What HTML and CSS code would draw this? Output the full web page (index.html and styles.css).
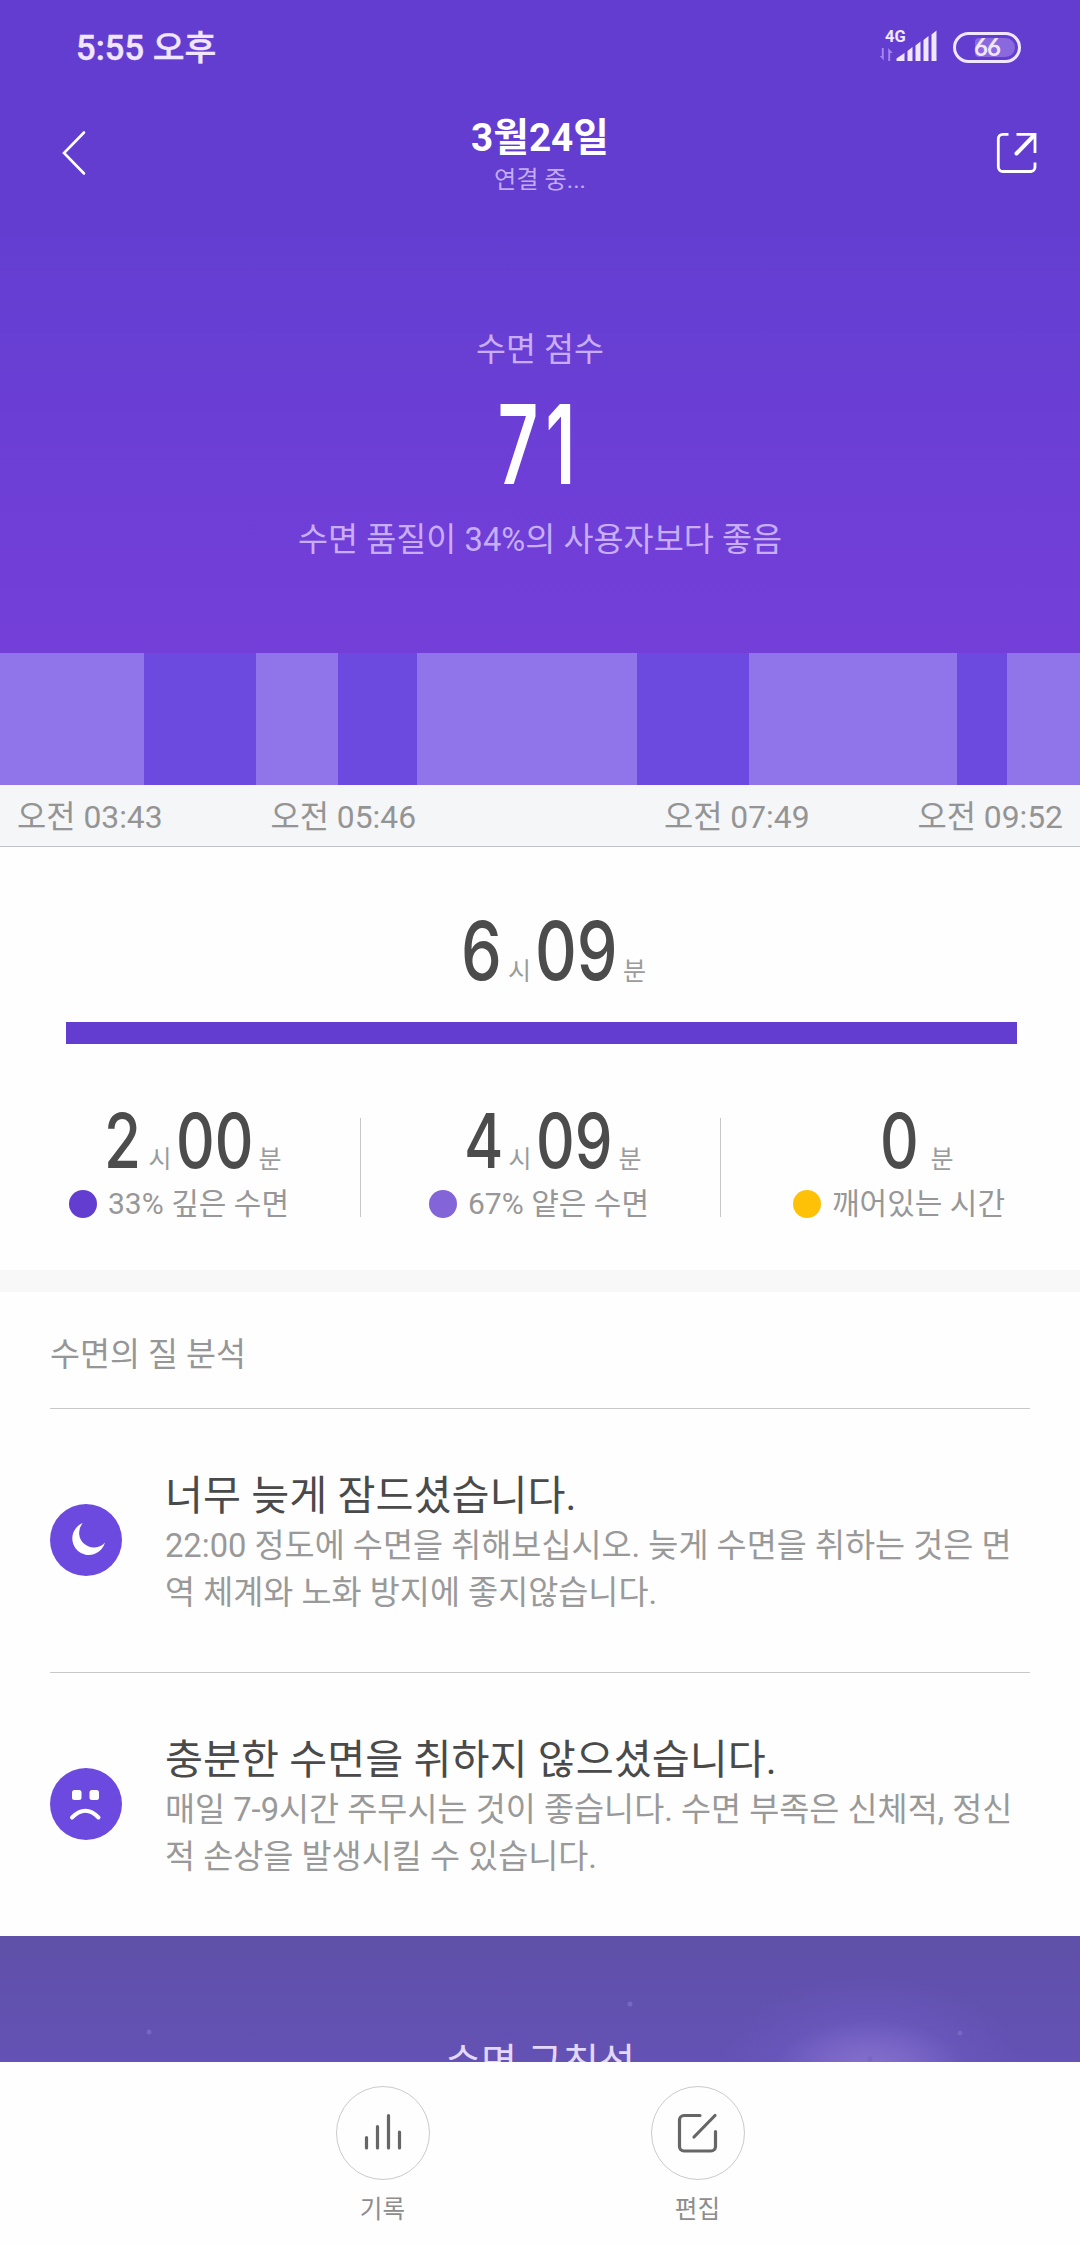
FILE: index.html
```html
<!DOCTYPE html>
<html lang="ko">
<head>
<meta charset="utf-8">
<title>수면</title>
<link rel="stylesheet" href="styles.css">
</head>
<body>
<div class="screen">
  <header class="hero">
    <div class="status">
      <span class="clock">5:55 오후</span>
      <div class="status-icons">
        <svg class="signal" width="60" height="34" viewBox="0 0 60 34">
          <text class="net" x="5" y="13.5">4G</text>
          <path class="faint" d="M3.8 20v12.5l-4-4.5h2V20zM8.2 33V20l4.6 5h-2.6v8z"/>
          <path class="solid" d="M16.500 33v-2.500l8-5.500v8zM27.500 23l5-4V33h-5zM35.500 17.500l5-4V33h-5zM43.500 12l5-4V33h-5zM51.500 6.500l5-4V33h-5z"/>
        </svg>
        <div class="battery"><span class="battery-level"></span><span class="battery-text">66</span></div>
      </div>
    </div>
    <nav class="nav">
      <svg class="back" width="26" height="46" viewBox="0 0 26 46"><path d="M23 2.500L3 23l20 20.500"/></svg>
      <div class="nav-title"><h1>3월24일</h1><p>연결 중...</p></div>
      <svg class="share" width="42" height="42" viewBox="0 0 42 42"><path d="M12.500 2.300H7A4.500 4.500 0 0 0 2.300 7V35A4.500 4.500 0 0 0 7 39.500H35A4.500 4.500 0 0 0 39 35V30.500M39 21V2.300H20.500"/><path class="thick" d="M38 3.500L20.500 21.500"/></svg>
    </nav>
    <div class="score">
      <p class="score-label">수면 점수</p>
      <p class="score-value">71</p>
      <p class="score-note">수면 품질이 34%의 사용자보다 좋음</p>
    </div>
  </header>

  <div class="timeline">
    <i class="light" style="width:144px"></i><i class="deep" style="width:111.500px"></i><i class="light" style="width:82.500px"></i><i class="deep" style="width:79px"></i><i class="light" style="width:220px"></i><i class="deep" style="width:111.700px"></i><i class="light" style="width:208.300px"></i><i class="deep" style="width:50px"></i><i class="light" style="width:73px"></i>
  </div>
  <div class="times"><span>오전 03:43</span><span>오전 05:46</span><span>오전 07:49</span><span>오전 09:52</span></div>

  <section class="summary">
    <div class="duration total"><b class="d1"><span>6</span></b><small>시</small><b class="d2"><span>09</span></b><small>분</small></div>
    <div class="total-bar"></div>
    <div class="phases">
      <div class="phase">
        <div class="duration"><b class="d1"><span>2</span></b><small>시</small><b class="d2"><span>00</span></b><small>분</small></div>
        <div class="legend"><i class="dot dot-deep"></i>33% 깊은 수면</div>
      </div>
      <div class="phase">
        <div class="duration"><b class="d1"><span>4</span></b><small>시</small><b class="d2"><span>09</span></b><small>분</small></div>
        <div class="legend"><i class="dot dot-light"></i>67% 얕은 수면</div>
      </div>
      <div class="phase">
        <div class="duration single"><b class="d1"><span>0</span></b><small>분</small></div>
        <div class="legend"><i class="dot dot-awake"></i>깨어있는 시간</div>
      </div>
    </div>
  </section>

  <section class="analysis">
    <h2>수면의 질 분석</h2>
    <article class="tip">
      <svg width="72" height="72" viewBox="0 0 72 72"><circle class="disc" cx="36" cy="36" r="36"/><path class="white" d="M32.800 19A16.600 16.600 0 1 0 55 38.500A14.300 14.300 0 0 1 32.800 19Z"/></svg>
      <div class="tip-text"><h3>너무 늦게 잠드셨습니다.</h3><p>22:00 정도에 수면을 취해보십시오. 늦게 수면을 취하는 것은 면<br>역 체계와 노화 방지에 좋지않습니다.</p></div>
    </article>
    <article class="tip">
      <svg width="72" height="72" viewBox="0 0 72 72"><circle class="disc" cx="36" cy="36" r="36"/><rect class="white" x="22" y="22" width="9.500" height="10" rx="2.500"/><rect class="white" x="39.500" y="22" width="9.500" height="10" rx="2.500"/><path class="frown" d="M22 49.500Q35.500 36 48.500 49.500"/></svg>
      <div class="tip-text"><h3>충분한 수면을 취하지 않으셨습니다.</h3><p>매일 7-9시간 주무시는 것이 좋습니다. 수면 부족은 신체적, 정신<br>적 손상을 발생시킬 수 있습니다.</p></div>
    </article>
  </section>

  <section class="regularity">
    <svg class="stars" width="1080" height="126" viewBox="0 0 1080 126"><circle cx="149" cy="96" r="2.500"/><circle cx="630" cy="68" r="2.500"/><circle cx="960" cy="97" r="2.500"/><circle cx="870" cy="123" r="2.500"/></svg>
    <h2>수면 규칙성</h2>
  </section>

  <footer class="actions">
    <div class="action">
      <span class="ring"><svg width="48" height="48" viewBox="0 0 48 48"><path d="M7.500 28.500V39M18.500 17.500V39M29.500 6.500V39M40.500 23V39"/></svg></span>
      <span>기록</span>
    </div>
    <div class="action">
      <span class="ring"><svg width="48" height="48" viewBox="0 0 48 48"><path d="M26 6.500H10A4.500 4.500 0 0 0 5.500 11V37.500A4.500 4.500 0 0 0 10 42H37A4.500 4.500 0 0 0 41.500 37.500V22.500M41 6.500L20 28"/></svg></span>
      <span>편집</span>
    </div>
  </footer>
</div>
</body>
</html>
```
FILE: styles.css
```css
* { box-sizing: border-box; margin: 0; padding: 0; }
body {
  width: 1080px;
  background: #fff;
  font-family: Roboto, "Noto Sans CJK KR", sans-serif;
  font-weight: 400;
}
h1, h2, h3 { font-weight: 400; }
svg { display: block; flex: none; }
.screen { display: flex; flex-direction: column; height: 2246px; overflow: hidden; background: #fefefe; }

/* hero */
.hero {
  height: 653px;
  flex: none;
  background: linear-gradient(#623dd0 0, #623dd0 200px, #673ed3 320px, #743fd9 653px);
  color: #fff;
}
.status { height: 96px; padding: 0 58px 0 76px; display: flex; justify-content: space-between; align-items: center; }
.clock { font-size: 34.600px; font-weight: 500; line-height: 40px; -webkit-text-stroke: .4px #f1e6ff; color: #f1e6ff; }
.status-icons { display: flex; gap: 13px; align-items: center; padding-right: 1px; margin-top: -2px; }
.signal { overflow: visible; margin-top: -4px; }
.net { font: 700 16.5px Roboto, sans-serif; fill: #f1e6ff; }
.faint { fill: #a184ee; }
.solid { fill: #f1e6ff; }
.battery {
  width: 68px; height: 31px; border: 3px solid #f1e6ff; border-radius: 16px;
  position: relative; display: flex; align-items: center; justify-content: center;
}
.battery-level { position: absolute; right: 3px; top: 3px; bottom: 3px; width: 40px; border-radius: 4px 10px 10px 4px; background: #8a68de; }
.battery-text { position: relative; font: 700 24px/25px Lato, sans-serif; letter-spacing: -1px; margin-top: -1px; color: #f1e6ff; }

.nav { height: 114px; padding: 0 42px 0 61px; display: flex; justify-content: space-between; align-items: center; }
.back path { fill: none; stroke: #fff; stroke-width: 2.600; stroke-linecap: round; }
.share path { fill: none; stroke: #fff; stroke-width: 2.800; }
.share .thick { stroke-width: 4; stroke-linecap: round; }
.nav-title { text-align: center; margin-right: 3px; padding-top: 7px; }
.nav-title h1 { font-size: 38.700px; font-weight: 700; line-height: 46px; }
.nav-title p { font-size: 24.200px; line-height: 38px; color: #c3abf5; }
.score { padding-top: 118px; text-align: center; color: #c8aefa; }
.score-label { font-size: 32.600px; line-height: 44px; }
.score-value { font: 600 110px/144px Inter, sans-serif; letter-spacing: 11px; color: #fff; transform: scaleX(.64); }
.score-note { font-size: 32.700px; line-height: 48px; }

/* sleep timeline */
.timeline { display: flex; height: 132px; flex: none; }
.light { background: #9074ea; }
.deep { background: #6c4adf; }
.times {
  height: 62px; flex: none; padding: 0 17px; display: flex; justify-content: space-between;
  background: #f5f6f8; border-bottom: 1px solid #bfc0c8;
  font-size: 31.800px; line-height: 65px; color: #949494;
}
.times span:nth-child(2) { margin-right: 140px; }

/* durations */
.summary { height: 423px; flex: none; padding-top: 61px; }
.duration { display: flex; align-items: baseline; justify-content: center; color: #4c4c4c; }
.duration b { font: 550 75px/80px Inter, sans-serif; width: 38px; }
.duration b span { display: inline-block; transform: scaleX(.8); transform-origin: 0 0; }
.duration .d2 { width: 77px; }
.duration small { font-size: 25px; line-height: 30px; color: #9b9b9b; margin: 0 4px 0 6px; }
.total { padding-left: 31px; }
.total b { font-size: 81px; line-height: 87px; width: 41px; }
.total .d2 { width: 82px; }
.total-bar { height: 22px; margin: 27px 63px 0 66px; background: #623dd0; }
.phases { display: flex; padding-top: 57px; }
.phase { width: 360px; height: 117px; position: relative; }
.phase + .phase::before { content: ""; position: absolute; left: 0; top: 17px; width: 1px; height: 99px; background: #c6c6c6; }
.phase .duration { padding-left: 30px; }
.phase .single { padding-left: 38px; }
.single small { margin-left: 12px; }
.legend { display: flex; align-items: center; justify-content: center; gap: 11px; font-size: 30px; line-height: 50px; height: 46px; color: #979797; padding-right: 2px; }
.dot { width: 28px; height: 28px; border-radius: 50%; }
.dot-deep { background: #623dd0; }
.dot-light { background: #8465d8; }
.dot-awake { background: #ffc107; }

/* analysis */
.analysis { height: 666px; flex: none; border-top: 22px solid #f8f8f8; padding: 0 50px; }
.analysis h2 { height: 116px; font-size: 32.600px; line-height: 126px; color: #969696; }
.tip { height: 264px; border-top: 1px solid #c8c8c8; display: flex; align-items: center; gap: 43px; white-space: nowrap; }
.tip > svg { margin-top: -2px; }
.disc { fill: #6c4adf; }
.white { fill: #fff; }
.frown { fill: none; stroke: #fff; stroke-width: 4; stroke-linecap: round; }
.tip-text { padding-top: 5px; }
.tip-text h3 { font-size: 41.300px; line-height: 54px; color: #4a4a4a; }
.tip-text p { font-size: 32.700px; line-height: 47.500px; color: #999; }

/* regularity card */
.regularity {
  height: 126px; flex: none; overflow: hidden; position: relative; text-align: center;
  background:
    radial-gradient(95px 50px at 870px 134px, #8672cc 0, #8672cc00 100%),
    radial-gradient(150px 95px at 870px 134px, #6f5cc4 0, #6f5cc400 100%),
    linear-gradient(#5f50a9, #6452b4);
}
.regularity h2 { padding-top: 97px; font-size: 39.200px; line-height: 60px; color: #e3d8ff; }
.stars { position: absolute; left: 0; top: 0; fill: #7766c2; }

/* bottom actions */
.actions { height: 184px; flex: none; background: #fefefe; display: flex; justify-content: center; gap: 221px; padding-top: 24px; }
.action { width: 94px; display: flex; flex-direction: column; align-items: center; font-size: 24.600px; line-height: 59px; color: #8d8d8d; }
.ring { width: 94px; height: 94px; border: 1.500px solid #cbcbcb; border-radius: 50%; display: flex; align-items: center; justify-content: center; }
.ring path { fill: none; stroke: #666; stroke-width: 3.200; stroke-linecap: round; }
```
